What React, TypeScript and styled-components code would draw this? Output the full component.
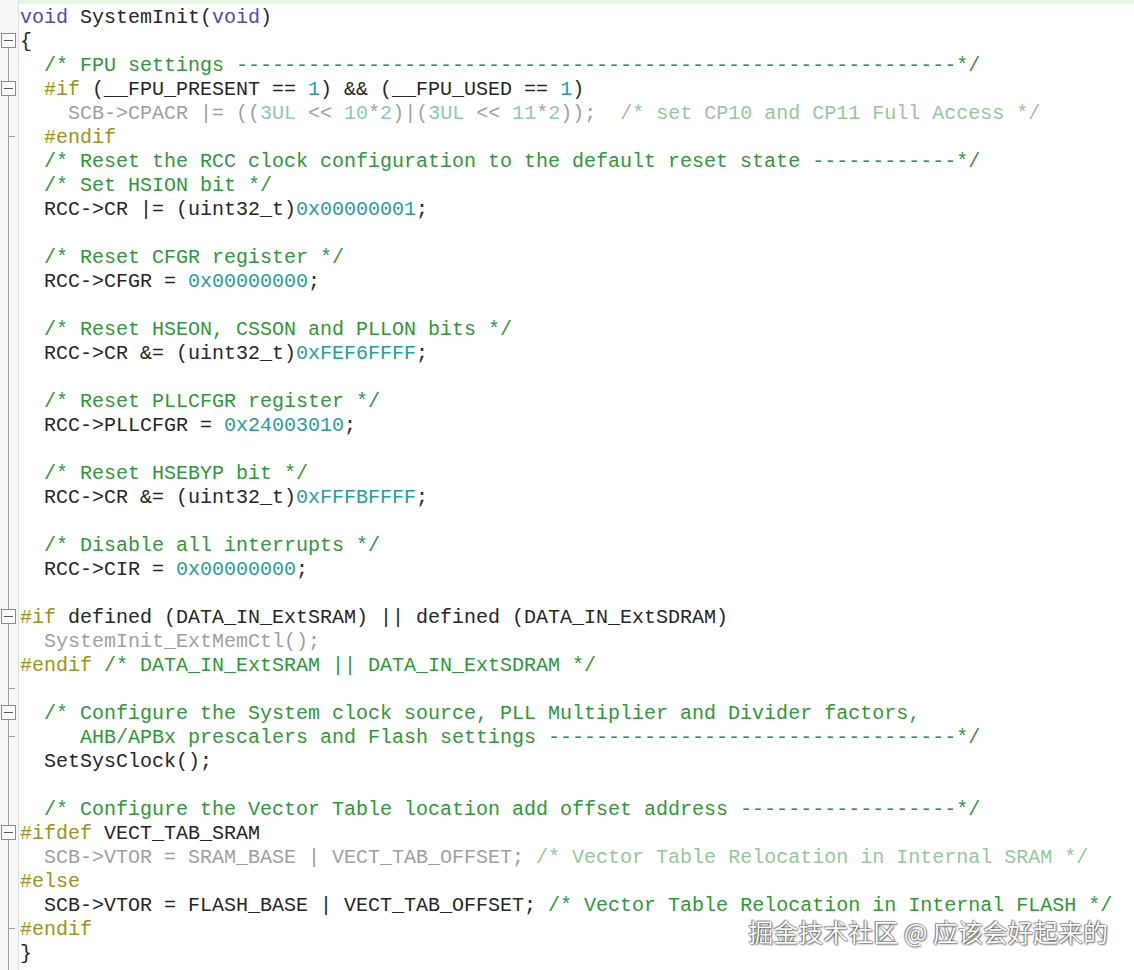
import React from 'react';
import styled, { createGlobalStyle, css } from 'styled-components';

type Kind = 'txt' | 'kw' | 'pp' | 'cm' | 'num';
type Tok = [Kind, string];
type Fold = 'none' | 'head' | 'box' | 'line' | 'tick';
interface CodeLine {
  toks: Tok[];
  fold: Fold;
  dim?: boolean;
}

const WIDTH = 80;
const rule = (prefix: string): string =>
  prefix + '-'.repeat(Math.max(0, WIDTH - 2 - prefix.length)) + '*/';

const lines: CodeLine[] = [
  { fold: 'none', toks: [['kw', 'void'], ['txt', ' SystemInit('], ['kw', 'void'], ['txt', ')']] },
  { fold: 'head', toks: [['txt', '{']] },
  { fold: 'line', toks: [['cm', rule('  /* FPU settings ')]] },
  {
    fold: 'box',
    toks: [
      ['pp', '  #if'],
      ['txt', ' (__FPU_PRESENT == '],
      ['num', '1'],
      ['txt', ') && (__FPU_USED == '],
      ['num', '1'],
      ['txt', ')'],
    ],
  },
  {
    fold: 'line',
    dim: true,
    toks: [
      ['txt', '    SCB->CPACR |= (('],
      ['num', '3UL'],
      ['txt', ' << '],
      ['num', '10'],
      ['txt', '*'],
      ['num', '2'],
      ['txt', ')|('],
      ['num', '3UL'],
      ['txt', ' << '],
      ['num', '11'],
      ['txt', '*'],
      ['num', '2'],
      ['txt', '));  '],
      ['cm', '/* set CP10 and CP11 Full Access */'],
    ],
  },
  { fold: 'tick', toks: [['pp', '  #endif']] },
  { fold: 'line', toks: [['cm', rule('  /* Reset the RCC clock configuration to the default reset state ')]] },
  { fold: 'line', toks: [['cm', '  /* Set HSION bit */']] },
  { fold: 'line', toks: [['txt', '  RCC->CR |= (uint32_t)'], ['num', '0x00000001'], ['txt', ';']] },
  { fold: 'line', toks: [] },
  { fold: 'line', toks: [['cm', '  /* Reset CFGR register */']] },
  { fold: 'line', toks: [['txt', '  RCC->CFGR = '], ['num', '0x00000000'], ['txt', ';']] },
  { fold: 'line', toks: [] },
  { fold: 'line', toks: [['cm', '  /* Reset HSEON, CSSON and PLLON bits */']] },
  { fold: 'line', toks: [['txt', '  RCC->CR &= (uint32_t)'], ['num', '0xFEF6FFFF'], ['txt', ';']] },
  { fold: 'line', toks: [] },
  { fold: 'line', toks: [['cm', '  /* Reset PLLCFGR register */']] },
  { fold: 'line', toks: [['txt', '  RCC->PLLCFGR = '], ['num', '0x24003010'], ['txt', ';']] },
  { fold: 'line', toks: [] },
  { fold: 'line', toks: [['cm', '  /* Reset HSEBYP bit */']] },
  { fold: 'line', toks: [['txt', '  RCC->CR &= (uint32_t)'], ['num', '0xFFFBFFFF'], ['txt', ';']] },
  { fold: 'line', toks: [] },
  { fold: 'line', toks: [['cm', '  /* Disable all interrupts */']] },
  { fold: 'line', toks: [['txt', '  RCC->CIR = '], ['num', '0x00000000'], ['txt', ';']] },
  { fold: 'line', toks: [] },
  {
    fold: 'box',
    toks: [['pp', '#if'], ['txt', ' defined (DATA_IN_ExtSRAM) || defined (DATA_IN_ExtSDRAM)']],
  },
  { fold: 'line', dim: true, toks: [['txt', '  SystemInit_ExtMemCtl();']] },
  { fold: 'line', toks: [['pp', '#endif'], ['cm', ' /* DATA_IN_ExtSRAM || DATA_IN_ExtSDRAM */']] },
  { fold: 'tick', toks: [] },
  { fold: 'box', toks: [['cm', '  /* Configure the System clock source, PLL Multiplier and Divider factors,']] },
  { fold: 'tick', toks: [['cm', rule('     AHB/APBx prescalers and Flash settings ')]] },
  { fold: 'line', toks: [['txt', '  SetSysClock();']] },
  { fold: 'line', toks: [] },
  { fold: 'line', toks: [['cm', rule('  /* Configure the Vector Table location add offset address ')]] },
  { fold: 'box', toks: [['pp', '#ifdef'], ['txt', ' VECT_TAB_SRAM']] },
  {
    fold: 'line',
    dim: true,
    toks: [
      ['txt', '  SCB->VTOR = SRAM_BASE | VECT_TAB_OFFSET; '],
      ['cm', '/* Vector Table Relocation in Internal SRAM */'],
    ],
  },
  { fold: 'line', toks: [['pp', '#else']] },
  {
    fold: 'line',
    toks: [
      ['txt', '  SCB->VTOR = FLASH_BASE | VECT_TAB_OFFSET; '],
      ['cm', '/* Vector Table Relocation in Internal FLASH */'],
    ],
  },
  { fold: 'tick', toks: [['pp', '#endif']] },
  { fold: 'line', toks: [['txt', '}']] },
];

const GlobalStyle = createGlobalStyle`
  html, body {
    margin: 0;
    padding: 0;
    background: #ffffff;
  }
  body {
    font-family: "Liberation Mono", "Courier New", monospace;
  }
`;

const Editor = styled.div`
  position: relative;
  display: flex;
  width: 1134px;
  height: 970px;
  overflow: hidden;
  background: #ffffff;
`;

const Gutter = styled.div`
  display: flex;
  flex-direction: column;
  width: 18px;
  flex: 0 0 18px;
  background: #f7f7f7;
  border-right: 1px solid #e0e0e0;
`;

const GutterTop = styled.div`
  height: 4px;
  flex: 0 0 4px;
`;

const guideLine = css`
  background-image: linear-gradient(#a2a2a2, #a2a2a2);
  background-repeat: no-repeat;
  background-position: 8px 0;
  background-size: 1px 100%;
`;

const FoldCell = styled.div<{ $fold: Fold }>`
  height: 24px;
  flex: 0 0 24px;
  display: flex;
  align-items: center;
  padding-left: 1px;
  box-sizing: border-box;
  ${({ $fold }) => $fold !== 'none' && $fold !== 'head' && guideLine}
  ${({ $fold }) =>
    $fold === 'head' &&
    css`
      background-image: linear-gradient(#a2a2a2, #a2a2a2);
      background-repeat: no-repeat;
      background-position: 8px 12px;
      background-size: 1px 12px;
    `}
  ${({ $fold }) =>
    $fold === 'tick' &&
    css`
      background-image: linear-gradient(#a2a2a2, #a2a2a2), linear-gradient(#a2a2a2, #a2a2a2);
      background-repeat: no-repeat, no-repeat;
      background-position: 8px 0, 8px 12px;
      background-size: 1px 100%, 7px 1px;
    `}
`;

const GutterFill = styled.div`
  flex: 1;
  ${guideLine}
`;

const FoldBox = styled.div`
  width: 15px;
  height: 15px;
  box-sizing: border-box;
  border: 1px solid #8c8c8c;
  background: #fbfbfb;
  display: flex;
  align-items: center;
  justify-content: center;

  &::after {
    content: '';
    width: 9px;
    height: 1px;
    background: #5a5a5a;
  }
`;

const CodeArea = styled.div`
  flex: 1;
  display: flex;
  flex-direction: column;
  padding-left: 1px;
`;

const CurrentLineBar = styled.div`
  height: 4px;
  flex: 0 0 4px;
  margin-left: -1px;
  background: #e6f6e3;
`;

const Row = styled.div`
  height: 24px;
  flex: 0 0 24px;
  box-sizing: border-box;
  padding-top: 2px;
  line-height: 24px;
  font-family: "Liberation Mono", "Courier New", monospace;
  font-size: 20px;
  white-space: pre;
  color: #222222;
`;

const activeColors: Record<Kind, string> = {
  txt: '#262626',
  kw: '#5048c4',
  pp: '#9c9417',
  cm: '#2c9a36',
  num: '#1f9ea3',
};

const dimColors: Record<Kind, string> = {
  txt: '#9f9f9f',
  kw: '#a6a2dc',
  pp: '#c8c48a',
  cm: '#92c996',
  num: '#87c7c9',
};

const Token = styled.span<{ $kind: Kind; $dim?: boolean }>`
  color: ${({ $kind, $dim }) => ($dim ? dimColors[$kind] : activeColors[$kind])};
`;

const Watermark = styled.div`
  position: absolute;
  right: 26px;
  bottom: 25px;
  font-family: "Noto Sans CJK SC", "Noto Sans", sans-serif;
  font-size: 25px;
  line-height: 28px;
  color: #ffffff;
  text-shadow: 0 0 1px rgba(0, 0, 0, 0.85), 1px 1px 2px rgba(0, 0, 0, 0.55),
    -1px -1px 1px rgba(0, 0, 0, 0.35);
`;

export default function App() {
  return (
    <>
      <GlobalStyle />
      <Editor>
        <Gutter>
          <GutterTop />
          {lines.map((l, i) => (
            <FoldCell key={i} $fold={l.fold}>
              {(l.fold === 'head' || l.fold === 'box') && <FoldBox />}
            </FoldCell>
          ))}
          <GutterFill />
        </Gutter>
        <CodeArea>
          <CurrentLineBar />
          {lines.map((l, i) => (
            <Row key={i}>
              {l.toks.map(([k, t], j) => (
                <Token key={j} $kind={k} $dim={l.dim}>
                  {t}
                </Token>
              ))}
            </Row>
          ))}
        </CodeArea>
        <Watermark>掘金技术社区 @ 应该会好起来的</Watermark>
      </Editor>
    </>
  );
}
